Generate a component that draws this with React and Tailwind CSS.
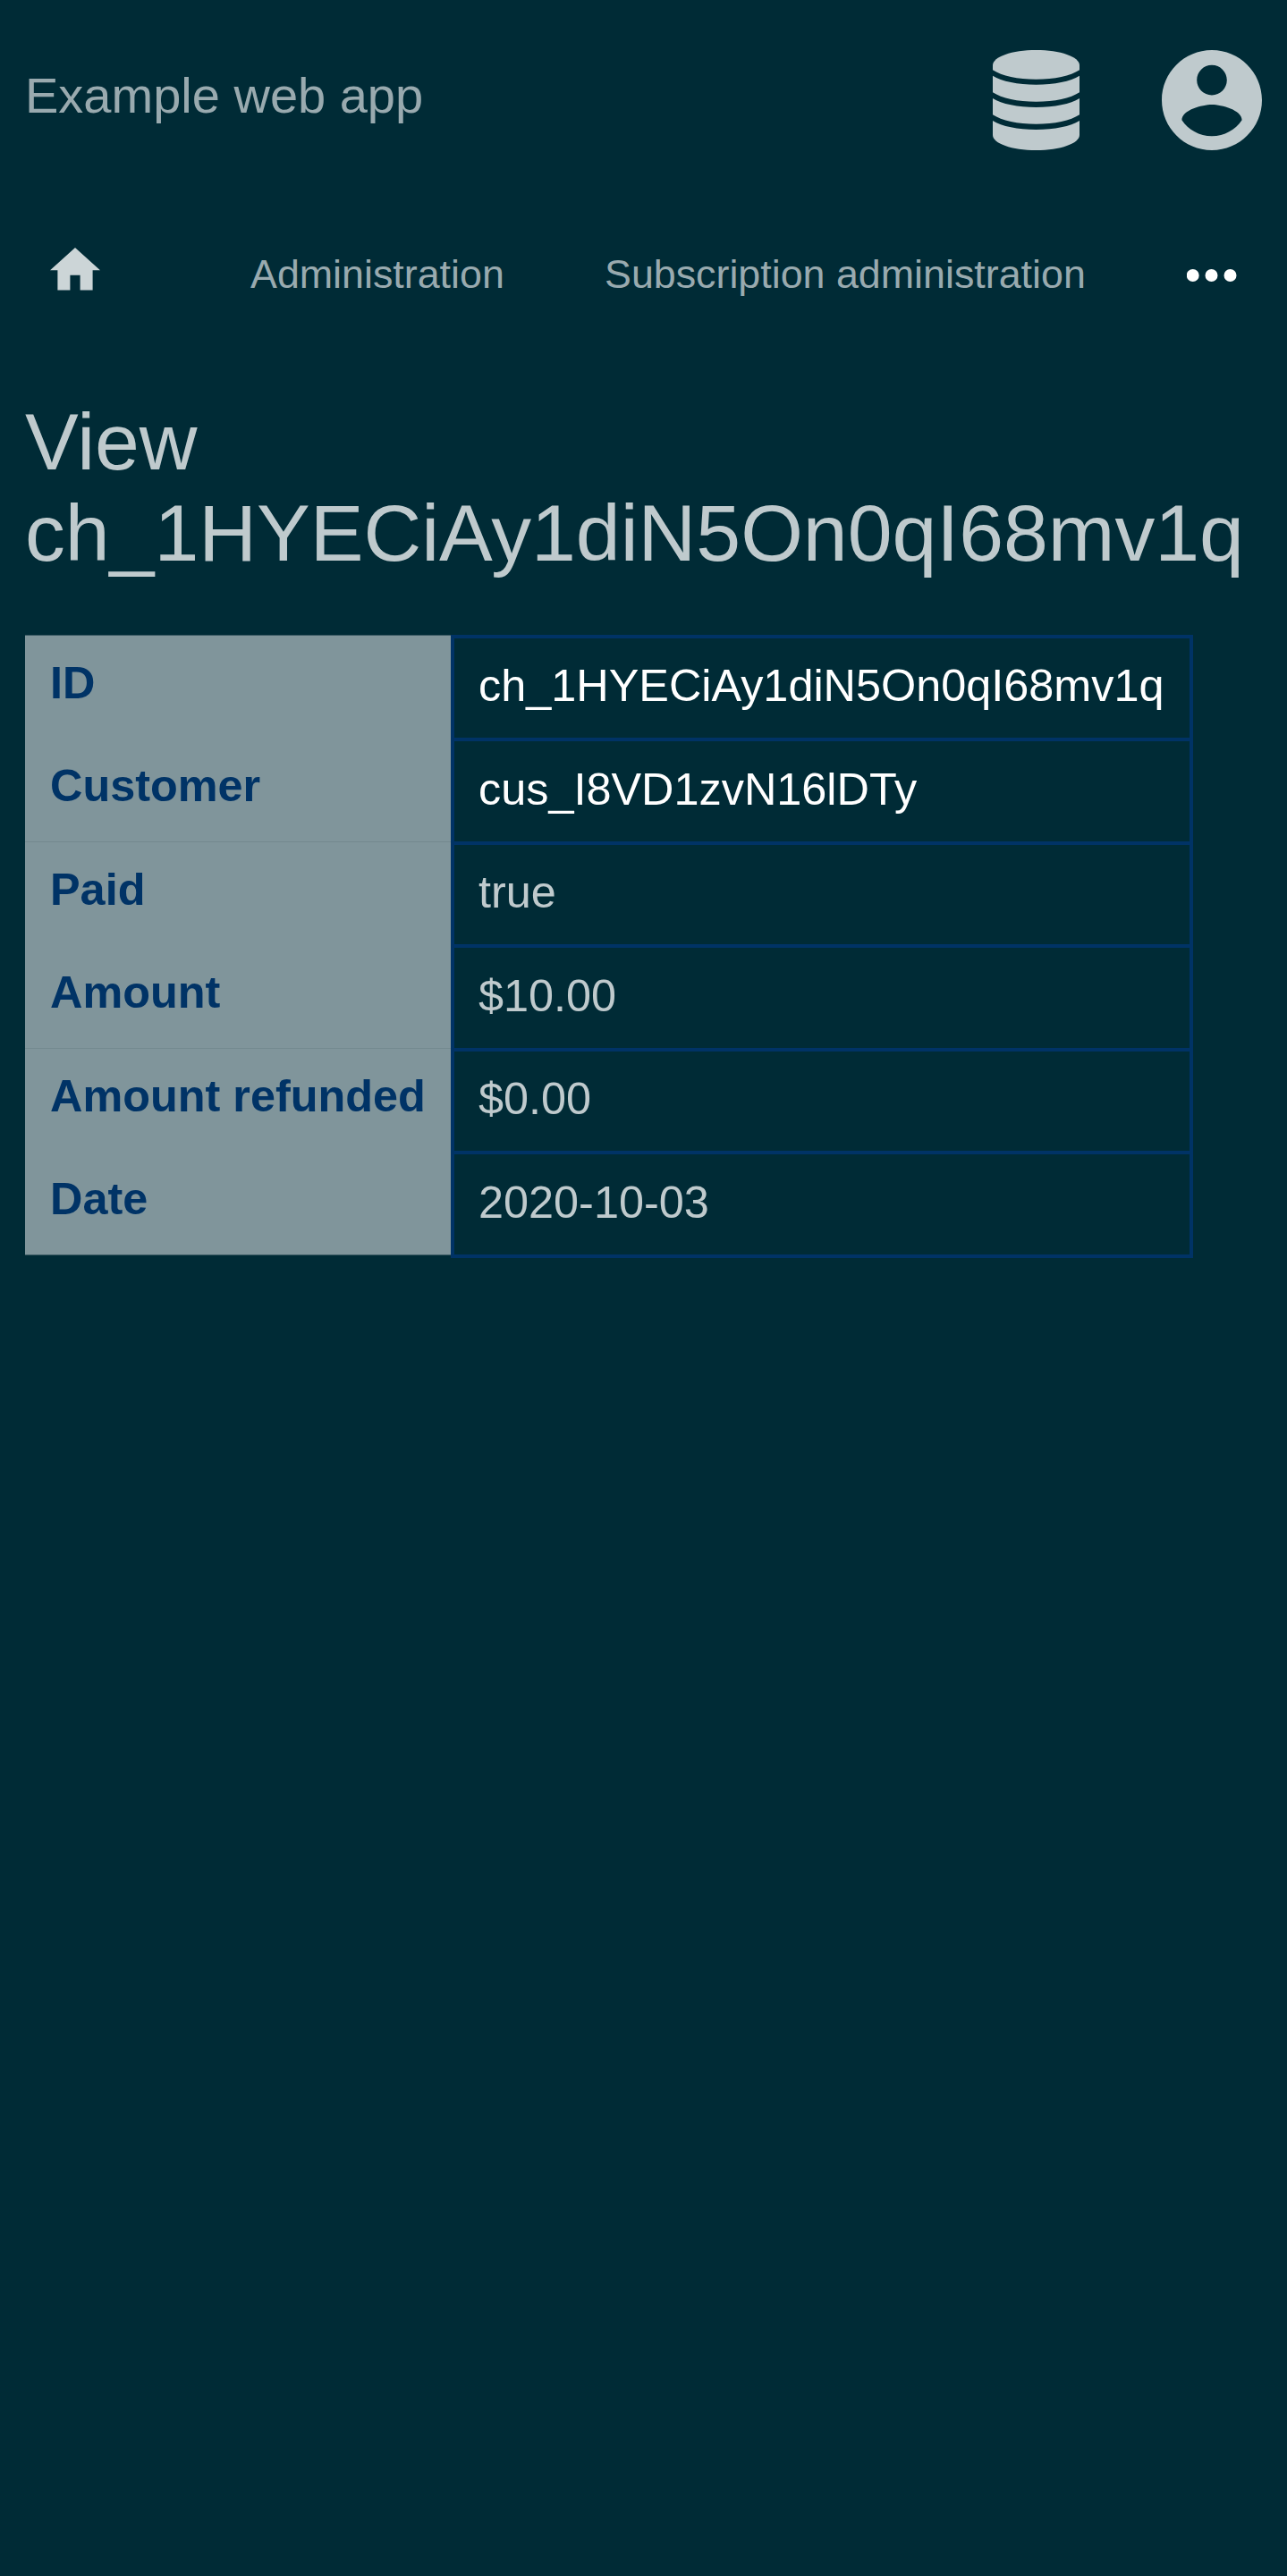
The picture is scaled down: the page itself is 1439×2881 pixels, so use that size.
import React from "react";

const rows = [
  { label: "ID", value: "ch_1HYECiAy1diN5On0qI68mv1q", link: true, edge: "border-[#3c5b65]" },
  { label: "Customer", value: "cus_I8VD1zvN16lDTy", link: true, edge: "border-transparent" },
  { label: "Paid", value: "true", edge: "border-[#73898f]" },
  { label: "Amount", value: "$10.00", edge: "border-transparent" },
  { label: "Amount refunded", value: "$0.00", edge: "border-[#73898f]" },
  { label: "Date", value: "2020-10-03", edge: "border-transparent" },
];

function DatabaseIcon() {
  return (
    <svg width="97" height="112" viewBox="0 0 97 112" fill="currentColor">
      <path d="M0 17C0 7.500 21.500 0 48.500 0S97 7.500 97 17V22.300C87 29 69 32.700 48.500 32.700S10 29 0 22.300Z" />
      <path d="M0 28.700C10 35 28 38.700 48.500 38.700S87 35 97 28.700V47.300C87 54 69 57.700 48.500 57.700S10 54 0 47.300Z" />
      <path d="M0 53.900C10 60.200 28 63.900 48.500 63.900S87 60.200 97 53.900V72.300C87 79 69 82.700 48.500 82.700S10 79 0 72.300Z" />
      <path d="M0 79C10 85.300 28 89 48.500 89S87 85.300 97 79V95C97 104.500 75.500 112 48.500 112S0 104.500 0 95Z" />
    </svg>
  );
}

function AccountIcon() {
  return (
    <svg width="112" height="112" viewBox="2 2 20 20" fill="currentColor">
      <path d="M12 2C6.480 2 2 6.480 2 12s4.480 10 10 10 10-4.480 10-10S17.520 2 12 2zm0 3c1.660 0 3 1.340 3 3s-1.340 3-3 3-3-1.340-3-3 1.340-3 3-3zm0 14.200c-2.500 0-4.710-1.280-6-3.220.030-1.990 4-3.080 6-3.080 1.990 0 5.970 1.090 6 3.080-1.290 1.940-3.500 3.220-6 3.220z" />
    </svg>
  );
}

export default function App() {
  return (
    <div className="min-h-[2881px] bg-[#002b36] pl-7 font-['Liberation_Sans',Arial,sans-serif] text-[#bfcacd]">
      <header className="flex h-[224px] items-start pt-14 pr-[28.5px]">
        <h2 className="mt-[19px] text-[56px] leading-[63px] whitespace-nowrap text-[#99aaaf]">Example web app</h2>
        <div className="ml-auto flex gap-[91.5px]">
          <DatabaseIcon />
          <AccountIcon />
        </div>
      </header>

      <nav className="flex h-[219px] items-start pt-[53px] pl-7 text-[44.8px] leading-[51px] whitespace-nowrap text-[#99aaaf]">
        <svg className="shrink-0 text-[#ccd5d7]" width="56" height="48" viewBox="2 3 20 17.143" fill="currentColor">
          <path d="M10 20v-6h4v6h5v-8h3L12 3 2 12h3v8z" />
        </svg>
        <a className="mt-[3.5px] ml-[168px] w-[284px]">Administration</a>
        <a className="mt-[3.5px] ml-[112px] w-[538px]">Subscription administration</a>
        <svg className="mt-[24px] ml-[113px] shrink-0 text-white" width="56" height="14" viewBox="0 0 56 14" fill="currentColor">
          <circle cx="6.700" cy="7" r="7" />
          <circle cx="27.500" cy="7" r="7" />
          <circle cx="48.500" cy="7" r="7" />
        </svg>
      </nav>

      <h1 className="h-[267px] text-[89.6px] leading-[102px]">
        View
        <br />
        ch_1HYECiAy1diN5On0qI68mv1q
      </h1>

      <div className="flex items-start text-[50.4px] leading-[57px] whitespace-nowrap">
        <div className="w-[476px] border-b border-[#3c5b65] bg-[#80959b] font-bold text-[#003366]">
          {rows.map((row) => (
            <div key={row.label} className={`h-[115.5px] border-t pt-[23.8px] pl-7 ${row.edge}`}>
              {row.label}
            </div>
          ))}
        </div>
        <div className="mt-[-0.1px] w-[830px] border-t-[4px] border-r-[4px] border-l-[4px] border-[#003366]">
          {rows.map((row) => (
            <div
              key={row.label}
              className={`h-[115.5px] border-b-[4px] border-[#003366] pt-[24.2px] pl-[27px] ${row.link ? "text-white" : ""}`}
            >
              {row.value}
            </div>
          ))}
        </div>
      </div>
    </div>
  );
}
